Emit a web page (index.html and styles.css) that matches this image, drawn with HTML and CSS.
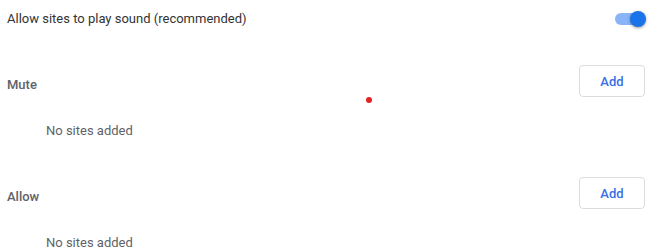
FILE: index.html
```html
<!DOCTYPE html>
<html lang="en">
<head>
    <meta charset="UTF-8">
    <title>Sound</title>
    <link rel="stylesheet" href="styles.css">
</head>
<body>
    <div class="page">
        <div class="toggle-row">
            <span class="label">Allow sites to play sound (recommended)</span>
            <span class="toggle"><span class="knob"></span></span>
        </div>

        <div class="section">
            <div class="section-head">
                <span class="section-title">Mute</span>
                <button class="add-btn">Add</button>
            </div>
            <div class="list-item">No sites added</div>
        </div>

        <div class="section">
            <div class="section-head">
                <span class="section-title">Allow</span>
                <button class="add-btn">Add</button>
            </div>
            <div class="list-item">No sites added</div>
        </div>

        <span class="dot"></span>
    </div>
</body>
</html>
```

FILE: styles.css
```css
body {
    margin: 0;
    background: #fff;
    font-family: Roboto, 'Liberation Sans', sans-serif;
    font-size: 13px;
    color: #333;
}

.page {
    position: relative;
    padding: 0 10px 0 7px;
    height: 250px;
    overflow: hidden;
}

.toggle-row {
    display: flex;
    align-items: center;
    justify-content: space-between;
    height: 37px;
}

.toggle {
    position: relative;
    width: 30px;
    height: 12px;
    border-radius: 6px;
    background: #8ab4f8;
    margin-top: 1px;
}

.toggle .knob {
    position: absolute;
    right: -1px;
    top: -2px;
    width: 16px;
    height: 16px;
    border-radius: 50%;
    background: #1a73e8;
    box-shadow: 0 1px 3px rgba(0, 0, 0, 0.4);
}

.section {
    margin-top: 28px;
}

.section + .section {
    margin-top: 23px;
}

.section-head {
    display: flex;
    align-items: center;
    justify-content: space-between;
    height: 32px;
    margin-bottom: 9px;
}

.section-title {
    font-weight: 500;
    color: #5f6368;
    padding-top: 6px;
}

.add-btn {
    width: 66px;
    height: 32px;
    background: #fff;
    border: 1px solid #dadce0;
    border-radius: 4px;
    color: #3a6ee8;
    font-family: inherit;
    font-size: 13px;
    font-weight: 500;
    padding: 0;
}

.list-item {
    display: flex;
    align-items: center;
    height: 48px;
    padding-left: 39px;
    color: #5f6368;
}

.dot {
    position: absolute;
    left: 366px;
    top: 97px;
    width: 6px;
    height: 6px;
    border-radius: 50%;
    background: #e02424;
}
```
